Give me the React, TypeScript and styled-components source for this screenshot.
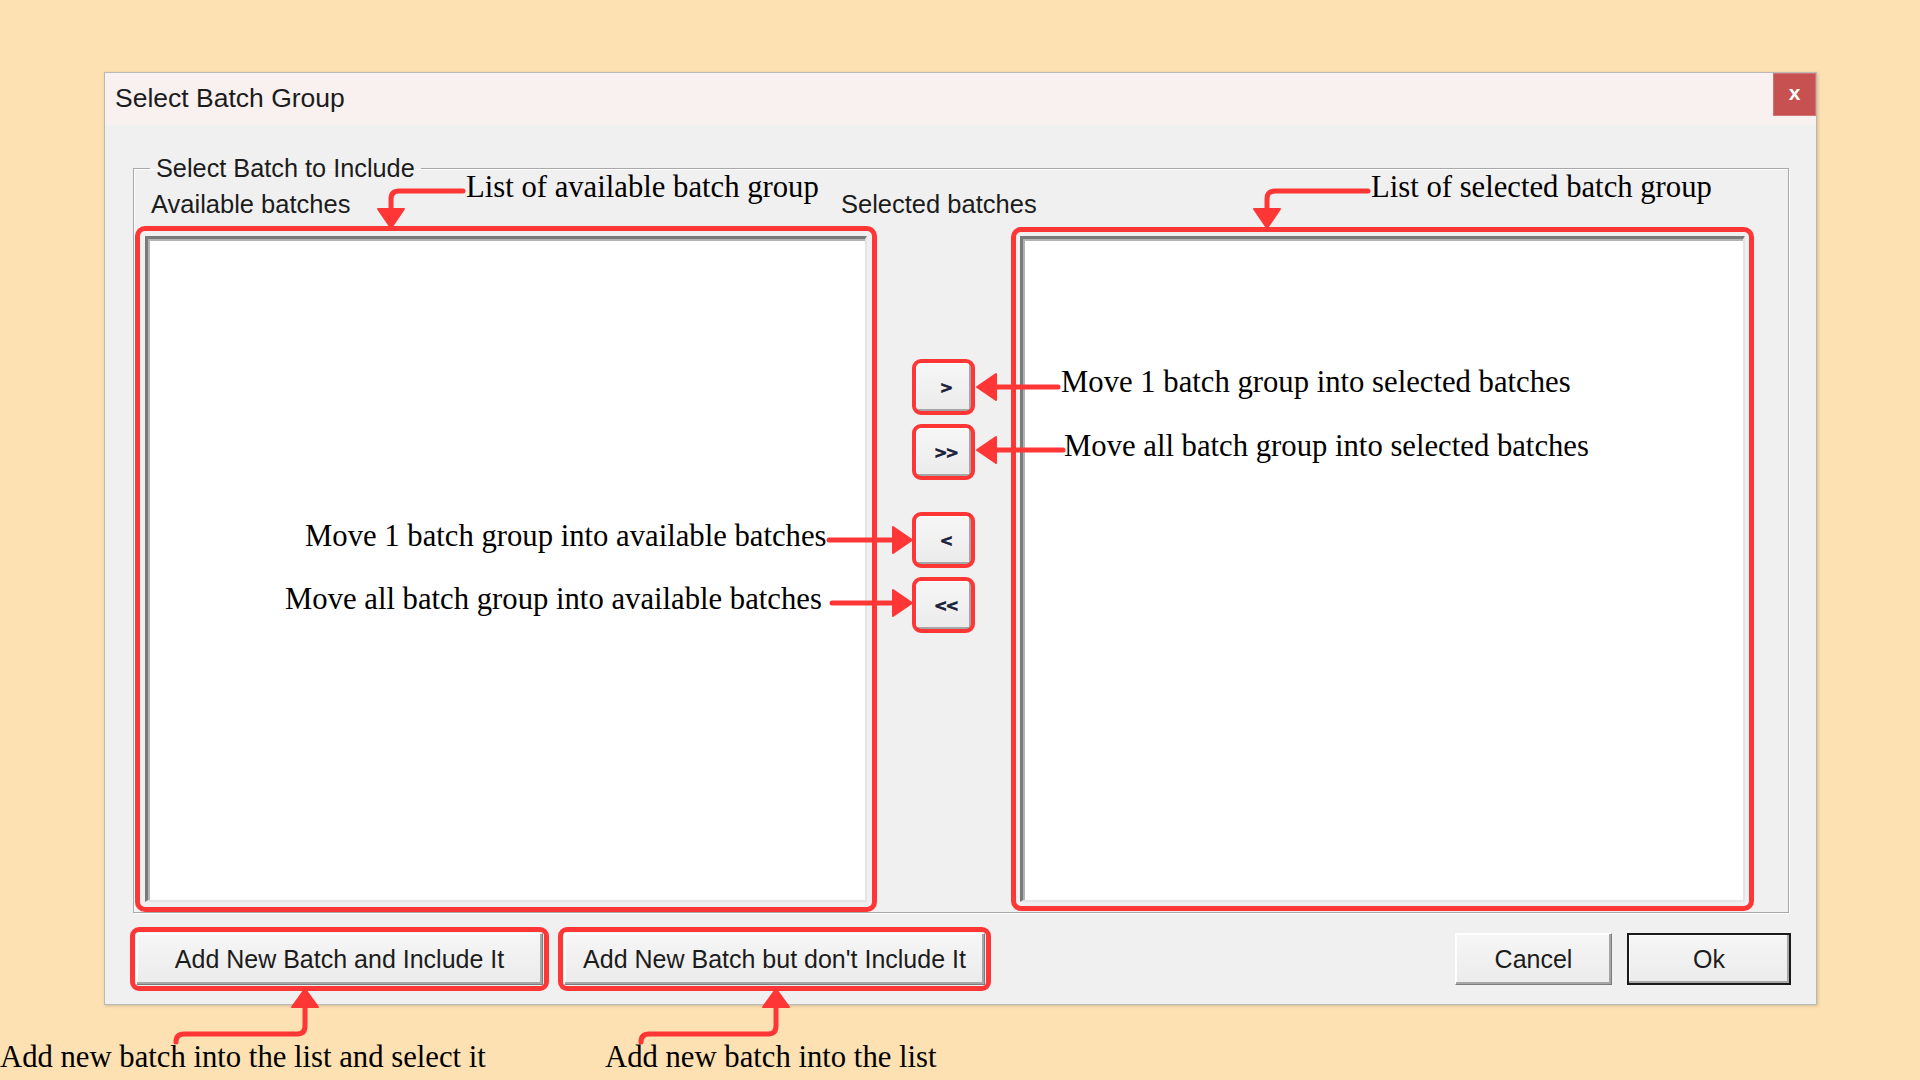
import React from 'react';
import styled, {createGlobalStyle} from 'styled-components';

const RED = '#ff3636';
const UI_FONT = '"Liberation Sans", Arial, sans-serif';
const NOTE_FONT = '"Liberation Serif", "Times New Roman", serif';

const GlobalStyle = createGlobalStyle`
  html, body {
    margin: 0;
    padding: 0;
  }
  body {
    background: #fee1b2;
    font-family: ${UI_FONT};
  }
`;

const Page = styled.div`
  position: relative;
  width: 1920px;
  height: 1080px;
  padding: 72px 0 0 104px;
  box-sizing: border-box;
  overflow: hidden;
  background: #fee1b2;
`;

const Dialog = styled.div`
  width: 1713px;
  box-sizing: border-box;
  border: 1px solid #b9b9b9;
  background: #f0f0f0;
  box-shadow: 1px 1px 3px rgba(0, 0, 0, .18);
`;

const TitleBar = styled.div`
  display: flex;
  align-items: flex-start;
  justify-content: space-between;
  height: 52px;
  background: #f8f1f0;
`;

const Title = styled.div`
  padding: 10px 0 0 10px;
  font-size: 26.5px;
  line-height: 30px;
  color: #1c1c1c;
`;

const Close = styled.div`
  display: flex;
  align-items: center;
  justify-content: center;
  width: 43px;
  height: 43px;
  box-sizing: border-box;
  border: 1px solid #d27474;
  background: #c75050;
  color: #fff;
  font-weight: bold;
  font-size: 21px;
  line-height: 1;
  padding-bottom: 4px;
`;

const Body = styled.div`
  padding: 29px 27px 19px 28px;
`;

const GroupBox = styled.fieldset`
  margin: 0;
  padding: 8px 43px 10px 11px;
  border: 1px solid #a8a8a8;
  box-shadow: inset 1px 1px 0 #fff, 1px 1px 0 #fff;
`;

const Legend = styled.legend`
  margin-left: 5px;
  padding: 0 6px;
  font-size: 25.3px;
  line-height: 28px;
  color: #1c1c1c;
`;

const LabelRow = styled.div`
  display: grid;
  grid-template-columns: 690px auto;
  height: 28px;
  padding-left: 6px;
  margin-bottom: 18px;
  font-size: 25.5px;
  line-height: 28px;
  color: #1c1c1c;
`;

const Columns = styled.div`
  display: grid;
  grid-template-columns: 722px 153px 725px;
`;

const ListBox = styled.div`
  height: 666px;
  box-sizing: border-box;
  background: #fff;
  border-style: solid;
  border-width: 3px 2px 2px 3px;
  border-color: #7a7a7a #e4e4e4 #e4e4e4 #7a7a7a;
  box-shadow: inset 2px 2px 0 #b4b4b4;
`;

const Marked = styled.div<{ $inset: number; $line: number; $radius: number }>`
  position: relative;

  &::after {
    content: '';
    position: absolute;
    inset: -${p => p.$inset}px;
    border: ${p => p.$line}px solid ${RED};
    border-radius: ${p => p.$radius}px;
    pointer-events: none;
  }
`;

const MoveColumn = styled.div`
  display: flex;
  flex-direction: column;
  align-items: center;
  gap: 38px;
  padding-top: 126px;
`;

const MovePair = styled.div`
  display: flex;
  flex-direction: column;
  gap: 15px;
`;

const Bevel = styled.button<{ $w: number; $h: number; $default?: boolean }>`
  display: flex;
  align-items: center;
  justify-content: center;
  width: ${p => p.$w}px;
  height: ${p => p.$h}px;
  box-sizing: border-box;
  margin: 0;
  padding: 0;
  font-family: ${UI_FONT};
  font-size: 25px;
  color: #1c1c1c;
  background: linear-gradient(#f6f6f6, #ebebeb);
  border-style: solid;
  border-width: ${p => (p.$default ? '2px' : '1px')};
  border-color: ${p => (p.$default ? '#1a1a1a' : '#fff #7c7c7c #7c7c7c #fff')};
  box-shadow: inset -2px -2px 0 #a6a6a6, inset 1px 1px 0 #fdfdfd;
`;

const Glyph = styled.span`
  padding-left: 4px;
  font-family: "DejaVu Sans", sans-serif;
  font-weight: 900;
  font-size: 16px;
  letter-spacing: -2px;
  color: #1a1f3a;
  -webkit-text-stroke: 0.6px #1a1f3a;
`;

const Footer = styled.div`
  display: flex;
  align-items: center;
  gap: 21px;
  margin: 20px -2px 0 3px;
`;

const Spacer = styled.div`
  flex: 1;
`;

const DialogActions = styled.div`
  display: flex;
  gap: 15px;
`;

const Overlay = styled.div`
  position: absolute;
  inset: 0;
  pointer-events: none;
`;

const Arrows = styled.svg`
  position: absolute;
  left: 0;
  top: 0;
`;

const Note = styled.div<{ $x: number; $y: number }>`
  position: absolute;
  left: ${p => p.$x}px;
  top: ${p => p.$y}px;
  font-family: ${NOTE_FONT};
  font-size: 30.7px;
  line-height: 31px;
  white-space: nowrap;
  color: #000;
`;

const notes = [
  {x: 466, y: 172, text: 'List of available batch group'},
  {x: 1371, y: 172, text: 'List of selected batch group'},
  {x: 1061, y: 367, text: 'Move 1 batch group into selected batches'},
  {x: 1064, y: 431, text: 'Move all batch group into selected batches'},
  {x: 305, y: 521, text: 'Move 1 batch group into available batches'},
  {x: 285, y: 584, text: 'Move all batch group into available batches'},
  {x: 0, y: 1042, text: 'Add new batch into the list and select it'},
  {x: 605, y: 1042, text: 'Add new batch into the list'},
];

const lines = [
  'M463 191 H399 Q391 191 391 199 V212',
  'M1368 191 H1275 Q1267 191 1267 199 V212',
  'M1058 387 H990',
  'M1063 450 H990',
  'M829 540 H898',
  'M832 603 H898',
  'M305 1003 V1026 Q305 1034 297 1034 H184 Q176 1034 176 1042',
  'M776 1003 V1026 Q776 1034 768 1034 H649 Q641 1034 641 1042',
];

const heads = [
  '378,209 404,209 391,228',
  '1254,209 1280,209 1267,228',
  '977,387 996,374 996,400',
  '977,450 996,437 996,463',
  '912,540 893,527 893,553',
  '912,603 893,590 893,616',
  '305,989 292,1007 318,1007',
  '776,989 763,1007 789,1007',
];

function Callouts() {
  return (
    <Overlay>
      <Arrows width="1920" height="1080" viewBox="0 0 1920 1080">
        {lines.map(d => (
          <path key={d} d={d} fill="none" stroke={RED} strokeWidth={5} strokeLinecap="round"/>
        ))}
        {heads.map(pts => (
          <polygon key={pts} points={pts} fill={RED} stroke={RED} strokeWidth={2} strokeLinejoin="round"/>
        ))}
      </Arrows>
      {notes.map(n => <Note key={n.text} $x={n.x} $y={n.y}>{n.text}</Note>)}
    </Overlay>
  );
}

function MoveButton({label}: { label: string }) {
  return (
    <Marked $inset={3} $line={4} $radius={9}>
      <Bevel $w={57} $h={50}><Glyph>{label}</Glyph></Bevel>
    </Marked>
  );
}

export default function App() {
  return (
    <Page>
      <GlobalStyle/>
      <Dialog>
        <TitleBar>
          <Title>Select Batch Group</Title>
          <Close>x</Close>
        </TitleBar>
        <Body>
          <GroupBox>
            <Legend>Select Batch to Include</Legend>
            <LabelRow>
              <span>Available batches</span>
              <span>Selected batches</span>
            </LabelRow>
            <Columns>
              <Marked $inset={10} $line={5} $radius={10}>
                <ListBox/>
              </Marked>
              <MoveColumn>
                <MovePair>
                  <MoveButton label="&gt;"/>
                  <MoveButton label="&gt;&gt;"/>
                </MovePair>
                <MovePair>
                  <MoveButton label="&lt;"/>
                  <MoveButton label="&lt;&lt;"/>
                </MovePair>
              </MoveColumn>
              <Marked $inset={9} $line={5} $radius={10}>
                <ListBox/>
              </Marked>
            </Columns>
          </GroupBox>
          <Footer>
            <Marked $inset={6} $line={5} $radius={9}>
              <Bevel $w={407} $h={52}>Add New Batch and Include It</Bevel>
            </Marked>
            <Marked $inset={6} $line={5} $radius={9}>
              <Bevel $w={421} $h={52}>Add New Batch but don't Include It</Bevel>
            </Marked>
            <Spacer/>
            <DialogActions>
              <Bevel $w={157} $h={52}>Cancel</Bevel>
              <Bevel $w={164} $h={52} $default>Ok</Bevel>
            </DialogActions>
          </Footer>
        </Body>
      </Dialog>
      <Callouts/>
    </Page>
  );
}
